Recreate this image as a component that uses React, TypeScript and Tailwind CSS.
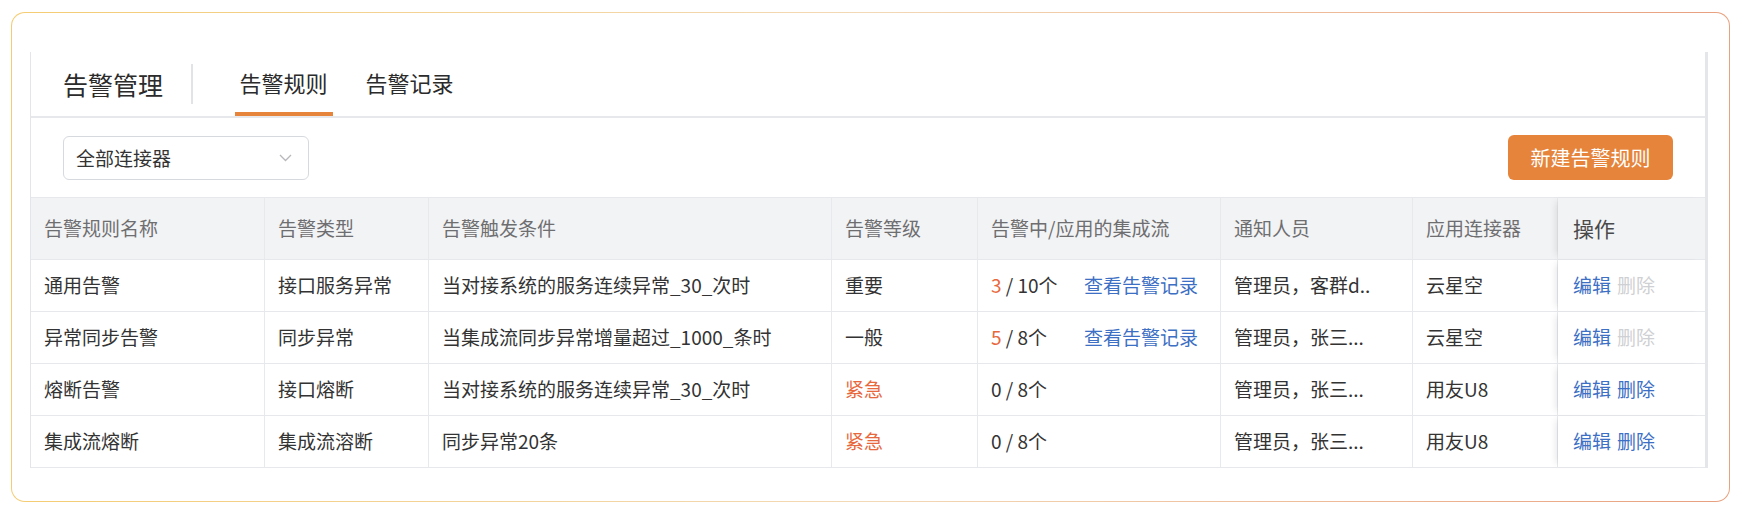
import React from "react";

type Row = {
  name: string;
  type: string;
  cond: string;
  level: string;
  urgent?: boolean;
  hit: string;
  hitHot: boolean;
  total: string;
  link: boolean;
  people: string;
  conn: string;
  delDisabled: boolean;
};

const rows: Row[] = [
  {
    name: "通用告警",
    type: "接口服务异常",
    cond: "当对接系统的服务连续异常_30_次时",
    level: "重要",
    hit: "3",
    hitHot: true,
    total: " / 10个",
    link: true,
    people: "管理员，客群d..",
    conn: "云星空",
    delDisabled: true,
  },
  {
    name: "异常同步告警",
    type: "同步异常",
    cond: "当集成流同步异常增量超过_1000_条时",
    level: "一般",
    hit: "5",
    hitHot: true,
    total: " / 8个",
    link: true,
    people: "管理员，张三...",
    conn: "云星空",
    delDisabled: true,
  },
  {
    name: "熔断告警",
    type: "接口熔断",
    cond: "当对接系统的服务连续异常_30_次时",
    level: "紧急",
    urgent: true,
    hit: "0",
    hitHot: false,
    total: " / 8个",
    link: false,
    people: "管理员，张三...",
    conn: "用友U8",
    delDisabled: false,
  },
  {
    name: "集成流熔断",
    type: "集成流溶断",
    cond: "同步异常20条",
    level: "紧急",
    urgent: true,
    hit: "0",
    hitHot: false,
    total: " / 8个",
    link: false,
    people: "管理员，张三...",
    conn: "用友U8",
    delDisabled: false,
  },
];

const cell = "flex items-center pl-[13px] border-r border-[#e8e9ec] whitespace-nowrap overflow-hidden";
const lastCell =
  "flex items-center pl-[15px] shadow-[-6px_0_7px_-4px_rgba(0,0,0,0.10)] whitespace-nowrap";

export default function App() {
  return (
    <div className="w-[1748px] h-[516px] bg-white pt-[12px] pl-[11px] font-['Noto_Sans_CJK_SC',sans-serif]">
      <div className="w-[1719px] h-[490px] rounded-[14px] p-px bg-gradient-to-r from-[#f4cc72] via-[#f3d9b6] to-[#e8a07f]">
        <div className="w-full h-full rounded-[13px] bg-white pt-[39px] pl-[18px] pr-[21px]">
          <div className="w-[1678px] border-l border-[#e4e5e8] border-r-[3px] border-r-[#e4e6ea] bg-white">
            {/* Header */}
            <div className="h-[66px] flex items-center border-b-2 border-[#e6e8ec] pl-[32px]">
              <span className="text-[25px] text-[#2b2b2b] leading-none">告警管理</span>
              <div className="w-[1.5px] h-[40px] bg-[#e2e3e6] ml-[28px] mr-[42px]" />
              <div className="h-full flex items-center border-b-4 border-[#e5843a] px-[5px] pb-0">
                <span className="text-[22px] text-[#2b2b2b] leading-none">告警规则</span>
              </div>
              <div className="h-full flex items-center border-b-4 border-transparent px-[5px] ml-[28px]">
                <span className="text-[22px] text-[#2b2b2b] leading-none">告警记录</span>
              </div>
            </div>

            {/* Toolbar */}
            <div className="h-[79px] flex items-center justify-between pl-[32px] pr-[32px]">
              <div className="w-[246px] h-[44px] border-[1.5px] border-[#d6d9de] rounded-[6px] flex items-center justify-between pl-[12px] pr-[16px]">
                <span className="text-[19px] text-[#333333] leading-none">全部连接器</span>
                <svg width="13" height="8" viewBox="0 0 13 8" fill="none">
                  <polyline points="1,1 6.5,6.5 12,1" stroke="#b8b8bc" strokeWidth="1.3" fill="none" />
                </svg>
              </div>
              <button className="w-[165px] h-[45px] rounded-[6px] bg-[#e5843a] text-white text-[20px] leading-none flex items-center justify-center">
                新建告警规则
              </button>
            </div>

            {/* Table */}
            <div className="border-t border-[#e6e8eb]">
              <div className="grid grid-cols-[234px_164px_403px_146px_243px_192px_145px_147px] h-[62px] bg-[#f2f3f5] border-b border-[#e6e8eb] text-[19px] text-[#6e6e70]">
                <div className={cell}>告警规则名称</div>
                <div className={cell}>告警类型</div>
                <div className={cell}>告警触发条件</div>
                <div className={cell}>告警等级</div>
                <div className={cell}>告警中/应用的集成流</div>
                <div className={cell}>通知人员</div>
                <div className={cell}>应用连接器</div>
                <div className={lastCell + " bg-[#f2f3f5] text-[21px] text-[#4a4a4a]"}>操作</div>
              </div>
              {rows.map((r, i) => (
                <div
                  key={i}
                  className="grid grid-cols-[234px_164px_403px_146px_243px_192px_145px_147px] h-[52px] border-b border-[#e6e8eb] text-[19px] text-[#333333]"
                >
                  <div className={cell}>{r.name}</div>
                  <div className={cell}>{r.type}</div>
                  <div className={cell}>{r.cond}</div>
                  <div className={cell}>
                    <span className={r.urgent ? "text-[#e8683e]" : "text-[#333333]"}>{r.level}</span>
                  </div>
                  <div className={cell}>
                    <span className="inline-block w-[93px]">
                      <span className={r.hitHot ? "text-[#e8683e]" : "text-[#333333]"}>{r.hit}</span>
                      <span>{r.total}</span>
                    </span>
                    {r.link && <span className="text-[#3d6fc4]">查看告警记录</span>}
                  </div>
                  <div className={cell}>{r.people}</div>
                  <div className={cell}>{r.conn}</div>
                  <div className={lastCell + " bg-white"}>
                    <span className="text-[#3d6fc4]">编辑</span>
                    <span className={"ml-[6px] " + (r.delDisabled ? "text-[#cfd0d3]" : "text-[#3d6fc4]")}>删除</span>
                  </div>
                </div>
              ))}
            </div>
          </div>
        </div>
      </div>
    </div>
  );
}
